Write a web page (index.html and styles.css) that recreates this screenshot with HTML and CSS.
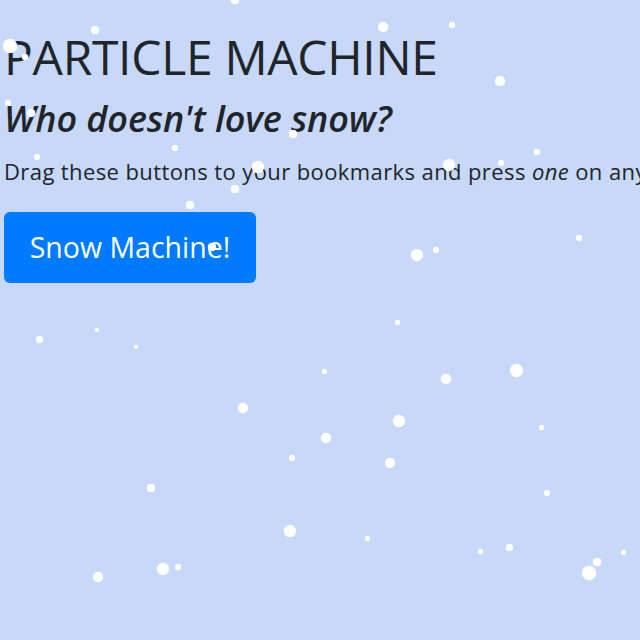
FILE: index.html
```html
<!DOCTYPE html>
<html lang="en">
<head>
  <meta charset="UTF-8" />
  <meta name="viewport" content="width=device-width, initial-scale=1.0" />
  <title>Particle Machine</title>
  <link rel="stylesheet" href="styles.css">
</head>
<body>
  <div class="page">
    <h1 class="title">PARTICLE MACHINE</h1>
    <h2 class="subtitle">Who doesn't love snow?</h2>
    <p class="lead">Drag these buttons to your bookmarks and press <em>one</em> on any page to start the particles.</p>
    <a class="btn" href="#">Snow Machine!</a>
  </div>

  <div class="snow">
    <span class="flake" style="left:231px;top:-4px;width:8px;height:8px"></span>
    <span class="flake" style="left:3px;top:39px;width:14px;height:14px"></span>
    <span class="flake" style="left:22px;top:54px;width:6px;height:6px"></span>
    <span class="flake" style="left:91px;top:26px;width:8px;height:8px"></span>
    <span class="flake" style="left:378px;top:22px;width:10px;height:10px"></span>
    <span class="flake" style="left:449px;top:22px;width:6px;height:6px"></span>
    <span class="flake" style="left:495px;top:76px;width:10px;height:10px"></span>
    <span class="flake" style="left:5px;top:100px;width:6px;height:6px"></span>
    <span class="flake" style="left:27px;top:109px;width:8px;height:8px"></span>
    <span class="flake" style="left:289px;top:130px;width:8px;height:8px"></span>
    <span class="flake" style="left:172px;top:145px;width:6px;height:6px"></span>
    <span class="flake" style="left:34px;top:154px;width:6px;height:6px"></span>
    <span class="flake" style="left:252px;top:161px;width:12px;height:12px"></span>
    <span class="flake" style="left:231px;top:185px;width:8px;height:8px"></span>
    <span class="flake" style="left:186px;top:201px;width:8px;height:8px"></span>
    <span class="flake" style="left:443px;top:159px;width:12px;height:12px"></span>
    <span class="flake" style="left:498px;top:160px;width:6px;height:6px"></span>
    <span class="flake" style="left:534px;top:149px;width:6px;height:6px"></span>
    <span class="flake" style="left:576px;top:235px;width:6px;height:6px"></span>
    <span class="flake" style="left:411px;top:249px;width:12px;height:12px"></span>
    <span class="flake" style="left:433px;top:247px;width:6px;height:6px"></span>
    <span class="flake" style="left:208px;top:243px;width:8px;height:8px"></span>
    <span class="flake" style="left:36px;top:336px;width:7px;height:7px"></span>
    <span class="flake" style="left:95px;top:328px;width:4px;height:4px"></span>
    <span class="flake" style="left:134px;top:345px;width:4px;height:4px"></span>
    <span class="flake" style="left:395px;top:320px;width:5px;height:5px"></span>
    <span class="flake" style="left:322px;top:369px;width:5px;height:5px"></span>
    <span class="flake" style="left:441px;top:374px;width:10px;height:10px"></span>
    <span class="flake" style="left:510px;top:364px;width:13px;height:13px"></span>
    <span class="flake" style="left:238px;top:403px;width:10px;height:10px"></span>
    <span class="flake" style="left:393px;top:415px;width:12px;height:12px"></span>
    <span class="flake" style="left:321px;top:433px;width:10px;height:10px"></span>
    <span class="flake" style="left:289px;top:455px;width:6px;height:6px"></span>
    <span class="flake" style="left:385px;top:458px;width:10px;height:10px"></span>
    <span class="flake" style="left:539px;top:425px;width:5px;height:5px"></span>
    <span class="flake" style="left:147px;top:484px;width:8px;height:8px"></span>
    <span class="flake" style="left:544px;top:490px;width:6px;height:6px"></span>
    <span class="flake" style="left:284px;top:525px;width:12px;height:12px"></span>
    <span class="flake" style="left:365px;top:536px;width:5px;height:5px"></span>
    <span class="flake" style="left:478px;top:549px;width:5px;height:5px"></span>
    <span class="flake" style="left:506px;top:544px;width:7px;height:7px"></span>
    <span class="flake" style="left:621px;top:550px;width:5px;height:5px"></span>
    <span class="flake" style="left:593px;top:558px;width:8px;height:8px"></span>
    <span class="flake" style="left:582px;top:566px;width:14px;height:14px"></span>
    <span class="flake" style="left:93px;top:572px;width:10px;height:10px"></span>
    <span class="flake" style="left:157px;top:563px;width:12px;height:12px"></span>
    <span class="flake" style="left:175px;top:564px;width:6px;height:6px"></span>
  </div>
</body>
</html>
```

FILE: styles.css
```css
html, body {
  margin: 0;
  height: 100%;
}
body {
  font-family: "Open Sans", "Noto Sans", sans-serif;
  background-color: #c8d8f8;
  color: #212529;
  overflow: hidden;
}
.page {
  padding: 28px 4px 0;
  white-space: nowrap;
}
.title {
  margin: 0 0 11px;
  font-size: 48px;
  font-weight: 400;
  line-height: 1.2;
  letter-spacing: -0.3px;
}
.subtitle {
  margin: 0 0 15px;
  font-size: 36px;
  font-weight: 600;
  font-style: italic;
  line-height: 1.2;
  letter-spacing: -0.1px;
}
.lead {
  margin: 0 0 24px;
  font-size: 22px;
  line-height: 1.5;
  letter-spacing: 0.4px;
}
.btn {
  display: inline-flex;
  align-items: center;
  justify-content: center;
  width: 252px;
  height: 71px;
  background: #007bff;
  color: #fff;
  font-size: 28.5px;
  text-decoration: none;
  border-radius: 6px;
}
.snow {
  position: fixed;
  top: 0;
  left: 0;
  width: 100%;
  height: 100%;
  pointer-events: none;
}
.flake {
  position: absolute;
  background: #fff;
  border-radius: 50%;
  box-shadow: 0 0 1px #fff;
}
```
